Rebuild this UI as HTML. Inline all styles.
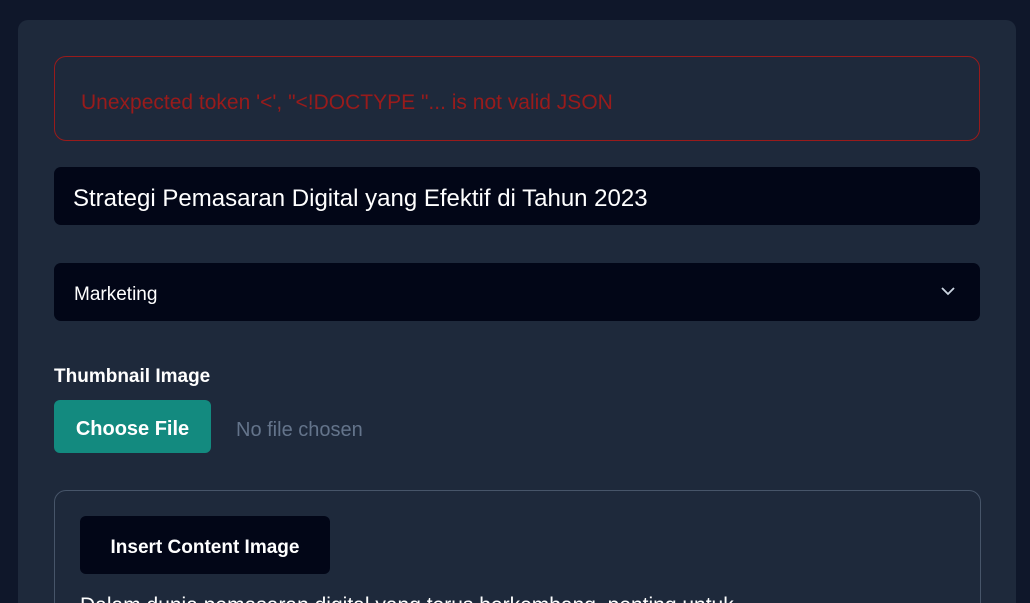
<!DOCTYPE html>
<html><head><style>
*{box-sizing:border-box;margin:0;padding:0}
html,body{width:1030px;height:603px;overflow:hidden}
body{background:#0f172a;font-family:"Liberation Sans",sans-serif;position:relative}
.card{position:absolute;left:18px;top:20px;width:998px;height:583px;background:#1e293b;border-radius:10px 10px 0 0}
.abs{position:absolute}
.err{left:54px;top:56px;width:926px;height:85px;border:1px solid #991b1b;border-radius:12px;color:#991b1b;font-size:21px;padding-left:26px;line-height:92px}
.inp{left:54px;width:926px;height:58px;background:#020617;border-radius:7px;color:#fff}
</style></head><body>
<div class="card"></div>
<div class="abs err">Unexpected token '&lt;', "&lt;!DOCTYPE "... is not valid JSON</div>
<div class="abs inp" style="top:167px;font-size:24px;line-height:63px;padding-left:19px">Strategi Pemasaran Digital yang Efektif di Tahun 2023</div>
<div class="abs inp" style="top:263px;font-size:19px;line-height:63px;padding-left:20px">Marketing
<svg class="abs" style="left:886px;top:22px" width="16" height="12" viewBox="0 0 16 12"><path d="M2 3l6 6 6-6" stroke="#cbd5e1" stroke-width="1.8" fill="none"/></svg></div>
<div class="abs" style="left:54px;top:366px;color:#fff;font-weight:bold;font-size:19px">Thumbnail Image</div>
<div class="abs" style="left:54px;top:400px;width:157px;height:53px;background:#138a7f;border-radius:6px;color:#fff;font-weight:bold;font-size:20px;line-height:58px;text-align:center">Choose File</div>
<div class="abs" style="left:236px;top:419px;color:#64748b;font-size:20px">No file chosen</div>
<div class="abs" style="left:54px;top:490px;width:927px;height:140px;border:1px solid #475569;border-radius:12px"></div>
<div class="abs" style="left:80px;top:516px;width:250px;height:58px;background:#020617;border-radius:6px;color:#fff;font-weight:bold;font-size:19px;line-height:64px;text-align:center">Insert Content Image</div>
<div class="abs" style="left:80px;top:594px;color:#fff;font-size:21px;white-space:nowrap">Dalam dunia pemasaran digital yang terus berkembang, penting untuk</div>
</body></html>
